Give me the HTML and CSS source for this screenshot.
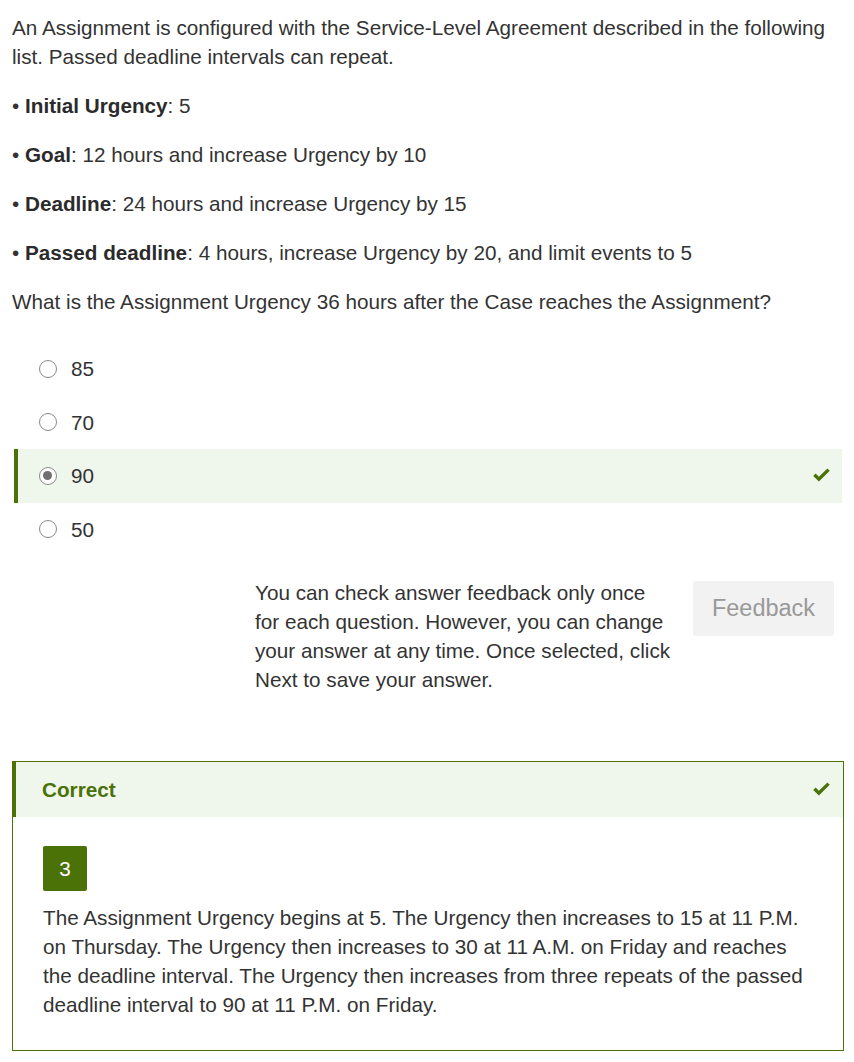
FILE: index.html
```html
<!DOCTYPE html>
<html lang="en">
<head>
<meta charset="utf-8">
<link rel="stylesheet" href="styles.css">
</head>
<body>
<main class="page">
  <p class="para">An Assignment is configured with the Service-Level Agreement described in the following list. Passed deadline intervals can repeat.</p>
  <p class="para">• <b>Initial Urgency</b>: 5</p>
  <p class="para">• <b>Goal</b>: 12 hours and increase Urgency by 10</p>
  <p class="para">• <b>Deadline</b>: 24 hours and increase Urgency by 15</p>
  <p class="para">• <b>Passed deadline</b>: 4 hours, increase Urgency by 20, and limit events to 5</p>
  <p class="para">What is the Assignment Urgency 36 hours after the Case reaches the Assignment?</p>

  <ul class="options">
    <li class="option"><span class="radio"></span><span class="label">85</span></li>
    <li class="option"><span class="radio"></span><span class="label">70</span></li>
    <li class="option selected"><span class="radio checked"></span><span class="label">90</span>
      <svg class="check" viewBox="0 0 20 16" width="19" height="15"><path d="M1.2 8.4 L3.7 5.9 L7.2 9.4 L16.3 0.4 L18.8 2.9 L7.2 14.4 Z" fill="#4b7207"/></svg>
    </li>
    <li class="option"><span class="radio"></span><span class="label">50</span></li>
  </ul>

  <div class="feedback-row">
    <p class="feedback-note">You can check answer feedback only once for each question. However, you can change your answer at any time. Once selected, click Next to save your answer.</p>
    <button class="feedback-btn" type="button">Feedback</button>
  </div>

  <section class="result">
    <header class="result-head">
      <span class="result-title">Correct</span>
      <svg class="check" viewBox="0 0 20 16" width="19" height="15"><path d="M1.2 8.4 L3.7 5.9 L7.2 9.4 L16.3 0.4 L18.8 2.9 L7.2 14.4 Z" fill="#4b7207"/></svg>
    </header>
    <div class="result-body">
      <span class="badge">3</span>
      <p class="explain">The Assignment Urgency begins at 5. The Urgency then increases to 15 at 11 P.M. on Thursday. The Urgency then increases to 30 at 11 A.M. on Friday and reaches the deadline interval. The Urgency then increases from three repeats of the passed deadline interval to 90 at 11 P.M. on Friday.</p>
    </div>
  </section>
</main>
</body>
</html>
```

FILE: styles.css
```css
* { box-sizing: border-box; }
html, body { margin: 0; padding: 0; background: #fff; }
body {
  font-family: "Liberation Sans", Arial, sans-serif;
  font-size: 20.7px;
  line-height: 29px;
  color: #333;
}
.page {
  padding: 13px 10px 10px 12px;
}
.para {
  margin: 0 0 20px 0;
}
.para b { font-weight: bold; color: #2b2b2b; }

.options {
  list-style: none;
  margin: 26px 0 0 0;
  padding: 0;
}
.option {
  display: flex;
  align-items: center;
  height: 53.5px;
  margin: 0 2px;
  padding-left: 21px;
  padding-right: 11px;
  border-left: 4px solid transparent;
}
.option.selected {
  background: #eff6ec;
  border-left-color: #4b7207;
}
.radio {
  width: 18px;
  height: 18px;
  border-radius: 50%;
  border: 1.4px solid #8a8a8a;
  background: #fff;
  flex: none;
  position: relative;
}
.radio.checked::after {
  content: "";
  position: absolute;
  left: 2.8px;
  top: 2.8px;
  width: 9.6px;
  height: 9.6px;
  border-radius: 50%;
  background: #6f6f6f;
}
.label {
  margin-left: 14px;
}
.option .check {
  margin-left: auto;
}

.feedback-row {
  display: flex;
  justify-content: flex-end;
  align-items: flex-start;
  gap: 19px;
  margin-top: 22px;
  padding-right: 10px;
}
.feedback-note {
  margin: 0;
  width: 419px;
}
.feedback-btn {
  font-family: "Liberation Sans", Arial, sans-serif;
  font-size: 23.5px;
  color: #999;
  background: #f2f2f2;
  border: none;
  border-radius: 3px;
  width: 141px;
  height: 55px;
  margin-top: 3px;
  padding: 0;
}

.result {
  margin-top: 67px;
  border: 1px solid #4b7207;
}
.result-head {
  display: flex;
  align-items: center;
  justify-content: space-between;
  height: 55px;
  background: #eff6ec;
  border-left: 4px solid #4b7207;
  margin-left: -1px;
  padding: 0 12px 0 26px;
}
.result-title {
  color: #4b7207;
  font-weight: bold;
}
.result-body {
  padding: 29px 29px 31px 30px;
}
.badge {
  display: flex;
  align-items: center;
  justify-content: center;
  width: 44px;
  height: 45px;
  background: #4b7207;
  color: #fff;
  border-radius: 2px;
}
.explain {
  margin: 12px 0 0 0;
}
```
